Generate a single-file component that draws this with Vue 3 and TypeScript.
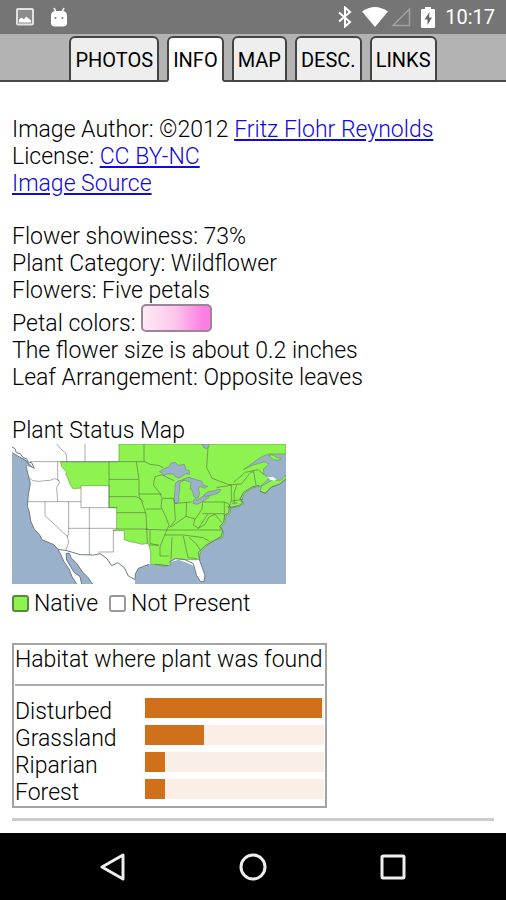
<script setup lang="ts">
import { ref } from 'vue'

interface Habitat {
  name: string
  share: number
}

const tabs: string[] = ['PHOTOS', 'INFO', 'MAP', 'DESC.', 'LINKS']
const activeTab = ref<string>('INFO')

const habitats: Habitat[] = [
  { name: 'Disturbed', share: 99 },
  { name: 'Grassland', share: 33 },
  { name: 'Riparian', share: 11 },
  { name: 'Forest', share: 11 },
]
</script>

<template>
  <div class="screen">
    <header class="status-bar">
      <div class="status-group">
        <svg class="status-icon" width="18" height="18" viewBox="0 0 18 18" aria-hidden="true">
          <rect x="1" y="1" width="16" height="15.5" rx="1" fill="#8b8b8b" stroke="#e2e2e2" stroke-width="2" />
          <path d="M3 14.5v-3l2.500-2 2.500 2 2-3 5 4v2z" fill="#fff" />
        </svg>
        <svg class="status-icon" width="18" height="20" viewBox="0 0 18 20" aria-hidden="true">
          <path d="M4 1l2 4M14 1l-2 4" stroke="#fff" stroke-width="1.600" />
          <path d="M1 9q0-5 5-5h6q5 0 5 5v7q0 3.500-4 3.500H5q-4 0-4-3.500z" fill="#fff" />
          <circle cx="5.500" cy="11" r="1" fill="#757575" />
          <circle cx="12.500" cy="11" r="1" fill="#757575" />
        </svg>
      </div>
      <div class="status-group status-right">
        <svg width="14" height="22" viewBox="0 0 14 22" aria-hidden="true">
          <path d="M1 6.500l11 9.500-5 4.500V1.500L12 6 1 15.500" fill="none" stroke="#fff" stroke-width="2" />
        </svg>
        <div class="signals">
          <svg width="26" height="20" viewBox="0 0 26 20" aria-hidden="true">
            <path d="M0 4.500Q13-4.500 26 4.500L13 20z" fill="#fff" />
          </svg>
          <svg width="20" height="20" viewBox="0 0 20 20" aria-hidden="true">
            <path d="M18.500 2v16.500H2z" fill="none" stroke="#a2a2a2" stroke-width="1.500" />
          </svg>
        </div>
        <svg width="14" height="21" viewBox="0 0 14 21" aria-hidden="true">
          <path d="M4 0h6v2h3q1 0 1 1v17q0 1-1 1H1q-1 0-1-1V3q0-1 1-1h3z" fill="#fff" />
          <path d="M8.500 5L3.500 12.500h3V18l4.500-7.500H8z" fill="#686868" />
        </svg>
        <span class="clock">10:17</span>
      </div>
    </header>

    <nav class="tabs" role="tablist">
      <button
        v-for="tab in tabs"
        :key="tab"
        type="button"
        role="tab"
        class="tab"
        :class="{ active: tab === activeTab }"
        :aria-selected="tab === activeTab"
        @click="activeTab = tab"
      >{{ tab }}</button>
    </nav>

    <main class="content">
      <section class="block">
        <p>Image Author: ©2012 <a href="#author">Fritz Flohr Reynolds</a></p>
        <p>License: <a href="#license">CC BY-NC</a></p>
        <p><a href="#source">Image Source</a></p>
      </section>

      <section class="block">
        <p>Flower showiness: 73%</p>
        <p>Plant Category: Wildflower</p>
        <p>Flowers: Five petals</p>
        <p class="petals">Petal colors: <span class="petal-swatch"></span></p>
        <p>The flower size is about 0.2 inches</p>
        <p>Leaf Arrangement: Opposite leaves</p>
      </section>

      <section class="block">
        <p>Plant Status Map</p>
        <svg class="map" viewBox="36 27 822 420" role="img" aria-label="Plant Status Map">
          <rect x="36" y="27" width="822" height="420" fill="#9ab1cc" />
          <!-- Mainland -->
          <path
            class="land"
            d="M36 27H600V300L592 350 600 380 615 420 612 438 602 440 590 422 580 392 560 383 535 374 510 382 505 392 465 388 447 388 415 400 406 418 405 447H278L262 425 248 412 230 385 214 370 208 355 198 355 200 375 212 395 222 412 240 425 245 447H230L216 425 207 402 192 380 182 358 174 343 160 328 127 315 118 298 103 283 92 258 88 230 82 214 85 180 91 145 84 118 78 92 100 98 80 76 36 55z"
          />
          <!-- States and provinces where the plant is native -->
          <path
            class="native"
            d="M357 27H858V57H805L780 68 757 85 730 104 760 90 795 80 807 87 790 102 792 119 807 128 797 140 782 153 792 150 816 135 843 136 858 120V132L838 148 815 156 796 175 780 170 785 153 762 157 735 174 724 194 732 206 720 214 692 220 690 236 678 242 675 265 663 276 671 292 668 307 640 318 620 334 602 350 597 374 557 374 525 370 508 380 512 391 488 394 468 388 452 388 452 350 445 325 425 328 408 323 390 320 373 314V287H340L350 282V218H327V152H243V159L219 161 208 144 205 132 197 118 199 110 184 94 182 80H357z"
          />
          <path class="native" d="M806 62l10-3 14 8 14 4-8 5-16-2z" />
          <path class="land" d="M803 126l16 0 11 8-7 3-12-3z" />
          <path class="coast" d="M36 36l9 5 4 12 12 3 8 12 11 3 4 10 11 2 8 17-14-8-13-16-18-10-22-13" />
          <!-- Great Lakes -->
          <g class="water">
            <path d="M478 110l18-11 10-2 7-12 13-3 9 9 18-3 5 16 9 3 2 11-12-2-8 5-11 8-12-4-6-8-19 0-8 5-6-7z" />
            <path d="M526 145l10-8 18-2-14 7-1 20-3 24 1 12-8 9-7-5 2-25z" />
            <path d="M547 133l20-6 24 8 14 3 5 12 13 4-8 6-16-6-4 8 4 13-5 14-12-3-5-20-7-4 3-20z" />
            <path d="M579 205l1-9 7-6 3 6 19-12 21-6-3 9-20 13-16 8z" />
            <path d="M611 180l14-10 15-2 14-5 8 1-5 9-20 7-20 4z" />
            <path d="M607 27h20v8l-7 6-9-3z" />
          </g>
          <!-- Boundaries -->
          <g class="border">
            <path d="M90 80H435l15 8 25 3 15 7M170 27l16 18 12 10 3 25M255 27v53M173 80v54l6 8-9 16 3 42M86 127l12 10 20 2 17-2 15-1 14-5 14 6M82 200h161M135 200v42l67 62 4 17-8 24M206 200v95l-5 11M243 159v59h109M268 218v142M206 280h144M340 283v68h-45" />
            <path d="M327 80v138M327 133h88M327 185h80l12 5 12 10M350 233h87M350 282h93M432 27v53M409 80l8 54v48l10 22 11 34 2 44 2 43M417 177h68M437 222h47M437 283l60 2h167M450 285v40l25 6M447 330h30" />
            <path d="M465 125l-5 25 20 25 6 15-3 26 15 30 9 25-9 19-18 46v27h26M465 125l20-6 20 10 18 8M487 190h34l3 15M523 205l3 50-18 23M525 205l50-4M560 202l-2 42 28 8 20-30 2-20M558 244l-45 32M585 252l-5 18 15 10 28-42M608 201h65l12 5 7 11M608 236h64M595 280l20-12 12-22 18-8 20 25M495 300h55l60 8 20 12M516 307l-3 66M550 303l14 65 27 3M567 307l22 20 13 20M673 201v41M680 215l13 2" />
            <path d="M624 38l-4 60 16 32 48 18 10 2M674 155l20-6 0 48-8 23M695 149l29-2 28-35 9-2 7 40M710 150l-8 24 1 30M695 198l34-5M696 205l17-1M792 119l-18-15-38 8-35 30M650 158l25-5" />
          </g>
          <path class="coast" d="M78 92l6 26 7 27-6 35-3 34 6 16 4 28 11 25 15 15 9 17 33 13 14 15 8 15 10 22 15 22 9 23 14 22M245 447l-5-22-18-13-10-17-12-20-2-20h10l6 15 16 15 18 27 14 13 16 22M174 343l27 4 40 12 40 1 19-4 20 14 15 22 18-9 20 15 12 25 20 11 1-17 9-17 32-12M465 388l40 4M510 380l17-9 28 3 25 12 10 36 12 18h10l3-20-15-40-5-28 20-20 48-27 5-17-9-14 12-11 3-23 12-6 2-16 28-6 12-8-8-12 11-20 27-17 20-4M780 168l16 7 19-19 23-8 20-16" />
        </svg>
        <p class="legend">
          <span class="legend-item"><span class="key key-native"></span>Native</span>
          <span class="legend-item"><span class="key"></span>Not Present</span>
        </p>
      </section>

      <table class="habitat">
        <thead>
          <tr>
            <th colspan="2"><div class="habitat-title">Habitat where plant was found</div></th>
          </tr>
        </thead>
        <tbody>
          <tr v-for="habitat in habitats" :key="habitat.name">
            <td class="habitat-name">{{ habitat.name }}</td>
            <td class="habitat-value">
              <div class="track"><div class="bar" :style="{ width: habitat.share + '%' }"></div></div>
            </td>
          </tr>
        </tbody>
      </table>
      <hr class="rule" />
    </main>

    <footer class="nav-bar">
      <button type="button" class="nav-button" aria-label="Back">
        <svg width="28" height="28" viewBox="0 0 28 28"><path d="M24 2v24L3 14z" /></svg>
      </button>
      <button type="button" class="nav-button" aria-label="Home">
        <svg width="28" height="28" viewBox="0 0 28 28"><circle cx="14" cy="14" r="12" /></svg>
      </button>
      <button type="button" class="nav-button" aria-label="Recent apps">
        <svg width="28" height="28" viewBox="0 0 28 28"><rect x="3" y="3" width="22" height="22" rx="1" /></svg>
      </button>
    </footer>
  </div>
</template>

<style>
body {
  margin: 0;
  background: #fff;
}
</style>

<style scoped>
.screen {
  display: flex;
  flex-direction: column;
  min-height: 100vh;
  font-family: Roboto, "Liberation Sans", sans-serif;
  font-size: 23px;
  font-weight: 300;
  line-height: 27px;
  color: #000;
}

.status-bar {
  display: flex;
  align-items: center;
  justify-content: space-between;
  height: 34px;
  padding: 0 11px 0 16px;
  background: #757575;
}

.status-group {
  display: flex;
  align-items: center;
  gap: 16px;
}

.status-right {
  gap: 10px;
}

.signals {
  display: flex;
  gap: 3px;
}

.clock {
  color: #fff;
  font-size: 20px;
  font-weight: 400;
}

.tabs {
  display: flex;
  justify-content: center;
  gap: 8px;
  height: 48px;
  box-sizing: border-box;
  padding-top: 2px;
  border-bottom: 2px solid #4a4a4a;
  background: #b3b3b3;
}

.tab {
  height: 46px;
  margin: 0;
  padding: 2px 4px 0;
  border: 2px solid #444;
  border-radius: 6px 6px 0 0;
  background: #eee;
  color: #000;
  font-family: inherit;
  font-size: 20px;
  font-weight: 400;
  line-height: 24px;
}

.tab.active {
  border-bottom-color: #fff;
  background: #fff;
}

.content {
  flex: 1;
  padding: 34px 12px 12px;
}

p {
  margin: 0;
}

.block {
  margin-bottom: 26px;
}

a {
  color: #1008e0;
  text-decoration: underline;
}

.petals {
  display: flex;
  align-items: flex-end;
  gap: 6px;
  height: 33px;
}

.petal-swatch {
  box-sizing: border-box;
  width: 71px;
  height: 28px;
  margin-bottom: 5px;
  border: 2px solid #9b859a;
  border-radius: 5px;
  background: linear-gradient(90deg, #ffeaf5, #fcc3ea 50%, #fb7ee2 90%);
}

.map {
  display: block;
  width: 274px;
  height: 140px;
}

.land {
  fill: #fff;
}

.native {
  fill: #8ef251;
  stroke: #62a344;
  stroke-width: 2;
}

.water {
  fill: #9ab1cc;
  stroke: #72906f;
  stroke-width: 2;
}

.border {
  fill: none;
  stroke: #444;
  stroke-opacity: 0.45;
  stroke-width: 3;
}

.coast {
  fill: none;
  stroke: #6f7a84;
  stroke-width: 3;
}

.legend {
  display: flex;
  gap: 11px;
  padding-top: 6px;
}

.legend-item {
  display: flex;
  align-items: center;
  gap: 5px;
}

.key {
  box-sizing: border-box;
  width: 17px;
  height: 17px;
  border: 2px solid #999;
  border-radius: 3px;
  background: #fff;
}

.key-native {
  border-color: #568b3a;
  background: #8ef251;
}

.habitat {
  width: 315px;
  border: 2px solid #a3a3a3;
  border-collapse: separate;
  border-spacing: 0;
}

.habitat th,
.habitat td {
  padding: 0 1px;
  font-weight: inherit;
  text-align: left;
}

.habitat-title {
  height: 38px;
  padding-top: 1px;
  margin-bottom: 12px;
  border-bottom: 2px solid #aaa;
  white-space: nowrap;
}

.habitat-name {
  width: 128px;
}

.track {
  height: 20px;
  margin-bottom: 7px;
  background: #faefe6;
}

.bar {
  height: 100%;
  background: #d0701a;
}

.rule {
  height: 3px;
  margin: 10px 0 0;
  border: 0;
  background: #ccc;
}

.nav-bar {
  display: flex;
  justify-content: center;
  gap: 112px;
  height: 67px;
  background: #000;
}

.nav-button {
  display: flex;
  align-items: center;
  padding: 0;
  border: 0;
  background: none;
}

.nav-button svg {
  fill: none;
  stroke: #eee;
  stroke-width: 3;
  stroke-linejoin: round;
}
</style>
